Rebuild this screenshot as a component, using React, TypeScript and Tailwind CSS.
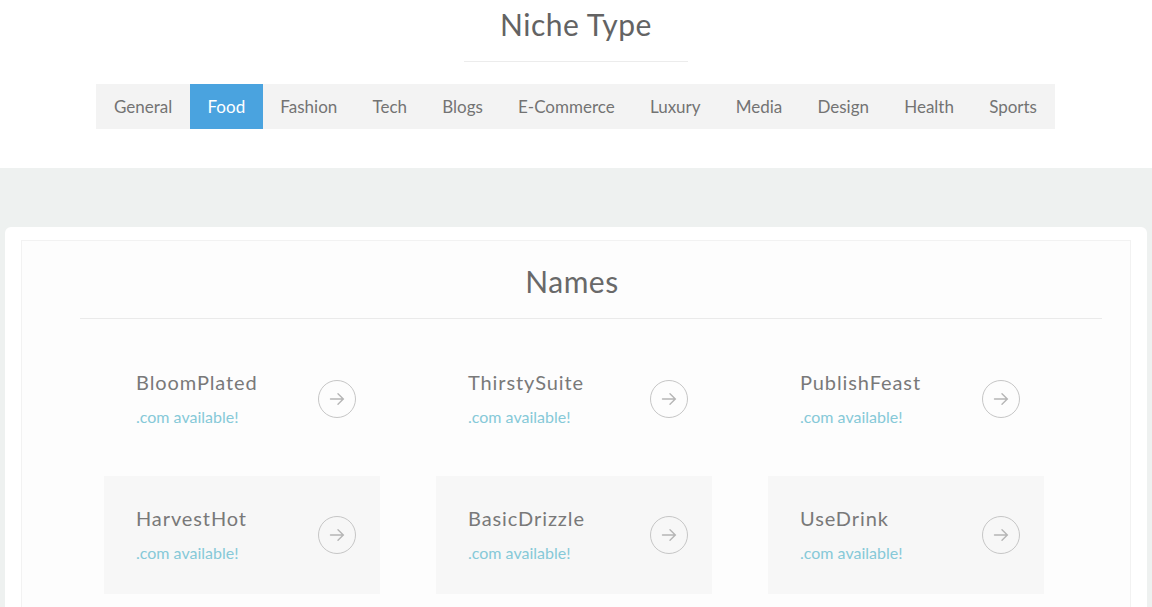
import React from "react";

const tabs = ["General", "Food", "Fashion", "Tech", "Blogs", "E-Commerce", "Luxury", "Media", "Design", "Health", "Sports"];
const names = [
  { n: "BloomPlated", hl: false },
  { n: "ThirstySuite", hl: false },
  { n: "PublishFeast", hl: false },
  { n: "HarvestHot", hl: true },
  { n: "BasicDrizzle", hl: true },
  { n: "UseDrink", hl: true },
];

function Arrow() {
  return (
    <div className="w-[38px] h-[38px] rounded-full border-[1.5px] border-[#c6c6c6] flex items-center justify-center shrink-0">
      <svg width="18" height="18" viewBox="0 0 18 18" fill="none" stroke="#b5b5b5" strokeWidth="1.4" strokeLinecap="round" strokeLinejoin="round">
        <path d="M2.5 9h13M10 3.8L15.3 9 10 14.2" />
      </svg>
    </div>
  );
}

export default function App() {
  return (
    <div className="w-[1152px] h-[607px] overflow-hidden bg-white" style={{ fontFamily: "Lato, 'Open Sans', sans-serif" }}>
      <div className="h-[168px] flex flex-col items-center">
        <h1 className="mt-[6px] text-[30px] leading-[36px] text-[#636363] tracking-[0.5px]">Niche Type</h1>
        <div className="mt-[19px] w-[224px] h-px bg-[#ececec]" />
        <div className="mt-[22px] flex bg-[#f3f3f3] h-[45px] ml-[-1px]">
          {tabs.map((t) => (
            <div
              key={t}
              className={
                t === "Food"
                  ? "px-[17.6px] flex items-center text-[17px] text-white bg-[#4aa3df]"
                  : "px-[17.6px] flex items-center text-[17px] text-[#737373]"
              }
            >
              {t}
            </div>
          ))}
        </div>
      </div>
      <div className="bg-[#eef1f0] pt-[59px] px-[5px]">
        <div className="bg-white rounded-t-[6px] pt-[13px] px-[16px] h-[380px]">
          <div className="border border-[#f2f2f2] border-b-0 h-full bg-[#fdfdfd] px-[58px]">
            <h2 className="text-center text-[30px] leading-[36px] text-[#696969] mt-[22px] tracking-[0.5px] pr-[8px]">Names</h2>
            <div className="mt-[19px] h-px bg-[#eaeaea] w-[1022px]" />
            <div className="mt-[21px] grid grid-cols-[276px_276px_276px] gap-x-[56px] gap-y-[18px] pl-[24px]">
              {names.map((x) => (
                <div
                  key={x.n}
                  className={(x.hl ? "bg-[#f7f7f7] " : "") + "h-[118px] flex items-center justify-between pl-[32px] pr-[24px]"}
                >
                  <div className="flex flex-col">
                    <div className="text-[20px] leading-[24px] text-[#797979] tracking-[0.9px] mt-[-1px]">{x.n}</div>
                    <div className="text-[16px] leading-[20px] text-[#86c9d8] mt-[13px]">.com available!</div>
                  </div>
                  <Arrow />
                </div>
              ))}
            </div>
          </div>
        </div>
      </div>
    </div>
  );
}
